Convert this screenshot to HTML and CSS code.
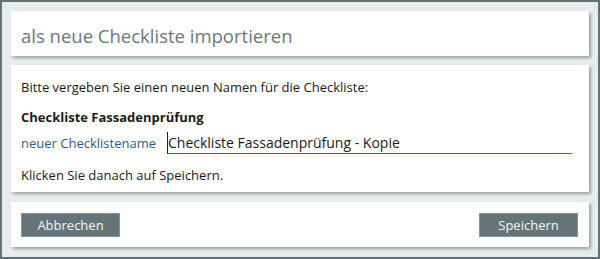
FILE: index.html
```html
<!DOCTYPE html>
<html lang="de">
<head>
    <meta charset="UTF-8">
    <title>als neue Checkliste importieren</title>
    <link rel="stylesheet" href="styles.css">
</head>
<body>
    <div class="dialog">
        <div class="panel panel-title">
            <h1 class="title">als neue Checkliste importieren</h1>
        </div>

        <div class="panel panel-body">
            <p class="hint">Bitte vergeben Sie einen neuen Namen für die Checkliste:</p>
            <p class="source-name">Checkliste Fassadenprüfung</p>
            <div class="field-row">
                <label class="field-label" for="newName">neuer Checklistename</label>
                <input class="field-input" id="newName" type="text" value="Checkliste Fassadenprüfung - Kopie">
            </div>
            <p class="hint">Klicken Sie danach auf Speichern.</p>
        </div>

        <div class="panel panel-actions">
            <button class="action-button">Abbrechen</button>
            <button class="action-button">Speichern</button>
        </div>
    </div>
</body>
</html>
```

FILE: styles.css
```css
* {
    margin: 0;
    padding: 0;
    box-sizing: border-box;
}

body {
    font-family: "Open Sans", "Noto Sans", sans-serif;
    font-size: 13px;
    color: #1a1a1a;
}

.dialog {
    width: 600px;
    height: 259px;
    border: 2px solid #627276;
    background-color: #e7ecec;
    padding: 9px 9px 0 9px;
    display: flex;
    flex-direction: column;
}

.panel {
    background-color: #fff;
    box-shadow: 2px 2px 3px rgba(60, 70, 72, 0.45);
}

.panel-title {
    height: 45px;
    display: flex;
    align-items: center;
    padding: 3px 0 0 10px;
}

.title {
    font-size: 18.5px;
    font-weight: normal;
    color: #6a787c;
}

.panel-body {
    height: 127px;
    margin-top: 9px;
    padding: 13px 10px 0 10px;
}

.hint {
    line-height: 18px;
}

.source-name {
    font-weight: bold;
    margin-top: 12px;
    line-height: 18px;
}

.field-row {
    display: flex;
    align-items: flex-end;
    margin-top: 6px;
    height: 22px;
}

.field-label {
    color: #2f5b88;
    width: 146px;
    line-height: 18px;
    padding-bottom: 2px;
}

.field-input {
    width: 405px;
    height: 22px;
    border: none;
    border-bottom: 1px solid #1f6aad;
    border-left: 1px solid #222;
    font-family: inherit;
    font-size: 14px;
    color: #1a1a1a;
    padding-left: 0;
    outline: none;
    background: transparent;
}

.panel-body .hint:last-child {
    margin-top: 12px;
}

.panel-actions {
    height: 45px;
    margin-top: 10px;
    display: flex;
    align-items: center;
    justify-content: space-between;
    padding: 0 11px 0 10px;
}

.action-button {
    width: 99px;
    height: 24px;
    border: 1px solid #85949a;
    background-color: #647479;
    color: #f3f5f5;
    font-family: inherit;
    font-size: 13px;
}
```
